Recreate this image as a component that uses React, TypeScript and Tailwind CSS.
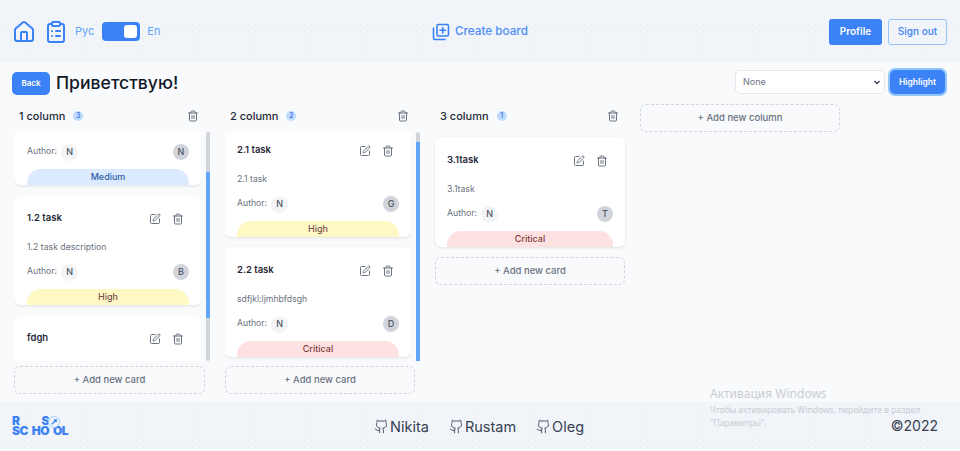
import React from "react";
import { Trash2, Github, SquarePen, Home, ClipboardList } from "lucide-react";

const prio: Record<string, string> = {
  Medium: "bg-[#dbeafe] text-[#2f5ea8]",
  High: "bg-[#fef8c5] text-[#7c5050]",
  Critical: "bg-[#fee2e2] text-[#7f3a3a]",
};

function Card({ title, desc, letter, p, mt = "", w = "w-[186px]" }: { title: string; desc: string; letter: string; p: string; mt?: string; w?: string }) {
  return (
    <div className={`bg-white rounded-md shadow-[0_1px_3px_rgba(0,0,0,0.1)] h-[110px] ${w} shrink-0 flex flex-col px-3 ${mt}`}>
      <div className="flex items-center justify-between h-[47px] pr-[5px]">
        <span className="text-[9.500px] font-semibold text-[#1f2937]">{title}</span>
        <div className="flex items-center gap-[11px] text-[#6b7280]">
          <SquarePen size={12} />
          <Trash2 size={12} />
        </div>
      </div>
      <div className="text-[8.700px] text-[#6b7280] h-[10px] leading-[10px]">{desc}</div>
      <div className="flex items-center justify-between mt-[11px] h-[18px]">
        <div className="flex items-center gap-[4px]">
          <span className="text-[8.700px] text-[#6b7280]">Author:</span>
          <span className="w-[17px] h-[17px] rounded-full bg-[#f3f4f6] text-[#4b5563] text-[9px] font-medium flex items-center justify-center">N</span>
        </div>
        <span className="w-[16px] h-[16px] rounded-full bg-[#d1d5db] text-[#4b5563] text-[9px] font-medium flex items-center justify-center">{letter}</span>
      </div>
      <div className="flex-1" />
      <div className={`h-[16px] rounded-t-[14px] text-[9px] font-medium text-center leading-[16px] ${prio[p]}`}>{p}</div>
    </div>
  );
}

function Scrollbar({ before, thumb }: { before: number; thumb: number }) {
  return (
    <div className="w-[4px] shrink-0 rounded-full bg-[#d1d5db] flex flex-col ml-[5px]">
      <div className="shrink-0" style={{ height: before }} />
      <div className="shrink-0 bg-[#60a5fa]" style={{ height: thumb }} />
    </div>
  );
}

function AddCard() {
  return (
    <div className="h-[28px] rounded-md border border-dashed border-[#d1d5db] flex items-center justify-center text-[9.500px] font-medium text-[#6b7280] pt-[1px]">+ Add new card</div>
  );
}

function ColumnHead({ name, n }: { name: string; n: number }) {
  return (
    <div className="h-[24px] flex items-center justify-between pl-[5px] pr-[6px]">
      <div className="flex items-center gap-[8px]">
        <span className="text-[11px] font-medium text-[#1f2937]">{name}</span>
        <span className="w-[10px] h-[10px] rounded-full bg-[#bfdbfe] text-[#1d4ed8] text-[7px] flex items-center justify-center">{n}</span>
      </div>
      <Trash2 size={12} className="text-[#6b7280]" />
    </div>
  );
}

export default function App() {
  return (
    <div className="w-[960px] h-[451px] relative overflow-hidden bg-[#f9fafc] flex flex-col font-['Inter',sans-serif]">
      <header className="h-[63px] shrink-0 flex items-center justify-between px-[12px] bg-[#f1f4f9] bg-[linear-gradient(#f1f4f9_22px,transparent_22px),radial-gradient(#e6eaf1_0.6px,transparent_0.8px)] bg-[size:100%_100%,7px_7px]">
        <div className="flex items-center w-[300px]">
          <Home size={24} className="text-[#3b82f6]" strokeWidth={2} />
          <ClipboardList size={24} className="text-[#3b82f6] ml-[8px]" strokeWidth={2} />
          <span className="text-[11px] text-[#60a5fa] ml-[7px]">Рус</span>
          <span className="ml-[8px] w-[38px] h-[19px] rounded-[4px] bg-[#3b82f6] flex justify-end items-center pr-[3px]">
            <span className="w-[13px] h-[13px] rounded-[3px] bg-white" />
          </span>
          <span className="text-[11px] text-[#60a5fa] ml-[7px]">En</span>
        </div>
        <div className="flex items-center gap-[5px] text-[#3b82f6] absolute left-[432px] top-[23px]">
          <svg width="18" height="18" viewBox="0 0 18 18" fill="none" stroke="currentColor" strokeWidth="1.600" strokeLinecap="round" strokeLinejoin="round">
            <rect x="5" y="1.500" width="11.500" height="11.500" rx="1.500" />
            <path d="M10.750 4.500v5.500M8 7.250h5.500" />
            <path d="M1.500 5v10a1.500 1.500 0 0 0 1.500 1.500h10" />
          </svg>
          <span className="text-[11.700px] font-medium text-[#4b8df7]">Create board</span>
        </div>
        <div className="flex items-center gap-[6px] mr-[1px]">
          <button className="w-[53px] h-[26px] rounded-[3px] bg-[#3b82f6] text-white text-[10px] font-semibold">Profile</button>
          <button className="w-[59px] h-[26px] rounded-[3px] border border-[#93c5fd] text-[#3b82f6] text-[10px] font-medium">Sign out</button>
        </div>
      </header>

      <main className="flex-1 min-h-0 flex flex-col px-[12px]">
        <div className="h-[41px] flex items-start justify-between pr-[3px] shrink-0 pt-[7px]">
          <div className="flex items-center gap-[6px]">
            <button className="w-[38px] h-[23px] rounded-[5px] bg-[#3b82f6] text-white text-[8px] font-semibold">Back</button>
            <h1 className="text-[17.600px] font-medium text-[#111827]">Приветствую!</h1>
          </div>
          <div className="flex items-center gap-[5px]">
            <div className="w-[150px] h-[24px] rounded-[5px] border border-[#e5e7eb] bg-white flex items-center justify-between pl-[7px] pr-[3px] text-[9px] text-[#6b7280]">
              <span>None</span>
              <svg width="8" height="8" viewBox="0 0 8 8" fill="none" stroke="#374151" strokeWidth="1.300"><path d="M1.500 3 4 5.500 6.500 3" /></svg>
            </div>
            <button className="w-[55px] h-[24px] rounded-[5px] bg-[#3b82f6] text-white text-[8.500px] font-semibold ring-2 ring-[#93c5fd]">Highlight</button>
          </div>
        </div>

        <div className="flex-1 min-h-0 flex items-start pl-[2px]">
          <section className="w-[191px] mr-[20px] shrink-0">
            <ColumnHead name="1 column" n={3} />
            <div className="h-[229px] w-[196px] mt-[4px] pl-[1px] flex">
              <div className="w-[186px] overflow-hidden flex flex-col gap-[10px]">
                <Card title="1.1 task" desc="1.1 task" letter="N" p="Medium" mt="mt-[-57px]" />
                <Card title="1.2 task" desc="1.2 task description" letter="B" p="High" />
                <Card title="fdgh" desc="" letter="F" p="High" />
              </div>
              <Scrollbar before={40} thumb={146} />
            </div>
            <div className="mt-[5px]"><AddCard /></div>
          </section>

          <section className="w-[190px] mr-[20px] shrink-0">
            <ColumnHead name="2 column" n={2} />
            <div className="h-[229px] w-[196px] mt-[4px] flex">
              <div className="w-[186px] overflow-hidden flex flex-col gap-[10px]">
                <Card title="2.1 task" desc="2.1 task" letter="G" p="High" mt="mt-[-5px]" />
                <Card title="2.2 task" desc="sdfjkl:ljmhbfdsgh" letter="D" p="Critical" />
              </div>
              <Scrollbar before={10} thumb={219} />
            </div>
            <div className="mt-[5px]"><AddCard /></div>
          </section>

          <section className="w-[190px] mr-[15px] shrink-0">
            <ColumnHead name="3 column" n={1} />
            <div className="pt-[9px]">
              <Card title="3.1task" desc="3.1task" letter="T" p="Critical" w="w-[190px]" />
            </div>
            <div className="mt-[10px]"><AddCard /></div>
          </section>

          <div className="w-[200px] h-[28px] rounded-md border border-dashed border-[#d1d5db] flex items-center justify-center text-[9.500px] font-medium text-[#6b7280] pt-[1px]">+ Add new column</div>
        </div>
      </main>

      <footer className="h-[47px] mb-[2px] shrink-0 flex items-center justify-between px-[12px] bg-[#f1f4f9] bg-[radial-gradient(#e6eaf1_0.6px,transparent_0.8px)] bg-[size:7px_7px]">
        <div className="relative w-[56px] mt-[1px] text-[#3b82f6] font-black text-[12px] leading-[10.500px] tracking-[-0.5px]">
          <div className="flex pr-[19px] justify-between"><span>R</span><span>S</span></div>
          <div className="flex justify-between"><span>SC</span><span>HO</span><span>OL</span></div>
          <svg className="absolute left-[36px] top-[0px]" width="12" height="12" viewBox="0 0 11 11" fill="none">
            <circle cx="5.500" cy="5.500" r="5" stroke="#93c5fd" strokeWidth="0.800" fill="#f1f4f9" />
            <path d="M3.500 7.500 7.500 3.500M5.500 3.500h2v2" stroke="#3b82f6" strokeWidth="1.200" />
          </svg>
        </div>
        <div className="flex items-center gap-[20px] text-[14.500px] text-[#374151] absolute left-[374px] top-[416px]">
          <span className="flex items-center gap-[1px]"><Github size={15} strokeWidth={1.400} />Nikita</span>
          <span className="flex items-center gap-[1px]"><Github size={15} strokeWidth={1.400} />Rustam</span>
          <span className="flex items-center gap-[1px]"><Github size={15} strokeWidth={1.400} />Oleg</span>
        </div>
        <span className="text-[14px] text-[#374151] pr-[10px]">©2022</span>
      </footer>

      <div className="absolute left-[710px] top-[386px] text-[#c8cdd4] font-['Noto_Sans',sans-serif]">
        <div className="text-[12px] leading-[16px]">Активация Windows</div>
        <div className="text-[8.500px] leading-[13px] mt-[1px] w-[220px]">Чтобы активировать Windows, перейдите в раздел "Параметры".</div>
      </div>
    </div>
  );
}
